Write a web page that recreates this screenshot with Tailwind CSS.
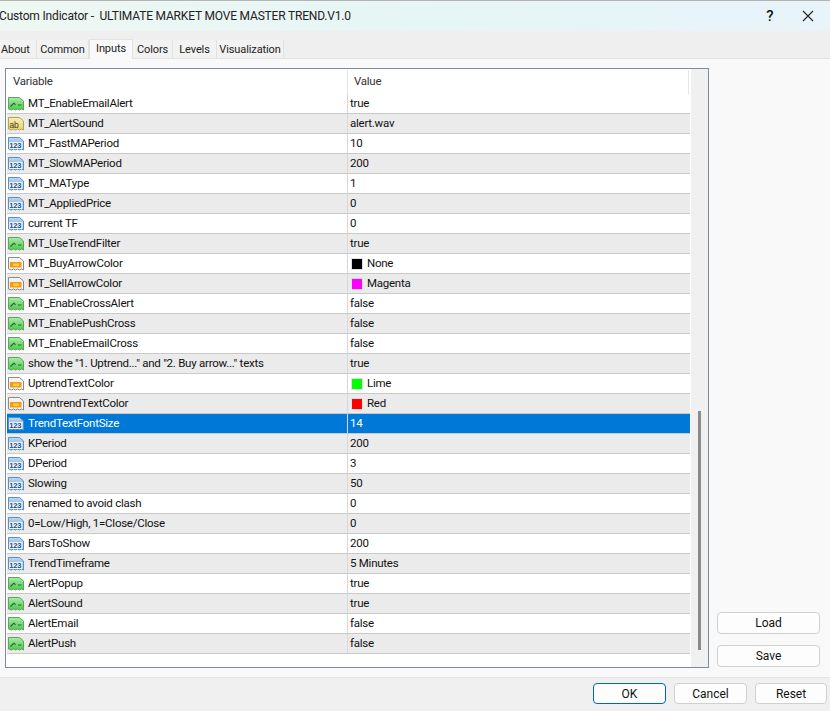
<!DOCTYPE html>
<html lang="en">
<head>
    <meta charset="UTF-8">
    <title>Custom Indicator</title>
    <script src="https://cdn.jsdelivr.net/npm/@tailwindcss/browser@4"></script>
</head>
<body class="bg-[#f9f9f9] text-[#111] font-['Roboto',sans-serif]">
    <!-- gradients for the row icons -->
    <svg class="absolute w-0 h-0">
        <defs>
            <linearGradient id="g-green" x1="0" y1="0" x2="0" y2="1"><stop offset="0" stop-color="#a9eaa9"/><stop offset="1" stop-color="#4fc84f"/></linearGradient>
            <linearGradient id="g-yellow" x1="0" y1="0" x2="0" y2="1"><stop offset="0" stop-color="#f6eeb4"/><stop offset="1" stop-color="#e4d27a"/></linearGradient>
            <linearGradient id="g-blue" x1="0" y1="0" x2="0" y2="1"><stop offset="0" stop-color="#bcd8f2"/><stop offset="1" stop-color="#6fa8dc"/></linearGradient>
        </defs>
    </svg>

    <div class="w-[830px] h-[711px] flex flex-col overflow-hidden">
        <!-- title bar -->
        <div class="h-[31px] shrink-0 border-t border-[#b4b4b4] bg-gradient-to-r from-[#eef8f3] via-[#e6f5f5] to-[#e8f3fa] flex items-center justify-between">
            <div class="text-[12px] tracking-[-0.015em] ml-[-1px] text-[#222] whitespace-pre">Custom Indicator -  ULTIMATE MARKET MOVE MASTER TREND.V1.0</div>
            <div class="flex items-center">
                <span class="w-[20px] text-center text-[15px] font-medium mr-[22px]">?</span>
                <svg class="w-[12px] h-[12px] mr-[16px]" viewBox="0 0 12 12"><path d="M1 1l10 10M11 1L1 11" stroke="#222" stroke-width="1.100"/></svg>
            </div>
        </div>

        <!-- tabs -->
        <div class="h-[28px] shrink-0 bg-[#efefef] border-b border-[#e2e2e2] flex items-end text-[11px] tracking-[-0.1px] leading-none text-[#222]">
            <div class="w-[37px] h-[18px] pt-[1px] border-r border-[#e2e2e2] bg-[#f2f2f2] flex items-center pl-[1px]">About</div>
            <div class="w-[52px] h-[18px] pt-[1px] border-r border-[#e2e2e2] bg-[#f2f2f2] flex items-center justify-center">Common</div>
            <div class="w-[44px] h-[20px] bg-[#f9f9f9] border-x border-t border-[#e2e2e2] mb-[-1px] flex items-start pt-[3px] justify-center">Inputs</div>
            <div class="w-[40px] h-[18px] pt-[1px] border-r border-[#e2e2e2] bg-[#f2f2f2] flex items-center justify-center">Colors</div>
            <div class="w-[44px] h-[18px] pt-[1px] border-r border-[#e2e2e2] bg-[#f2f2f2] flex items-center justify-center">Levels</div>
            <div class="w-[67px] h-[18px] pt-[1px] border-r border-[#e2e2e2] bg-[#f2f2f2] flex items-center justify-center">Visualization</div>
        </div>

        <!-- body -->
        <div class="flex-1 flex pt-[9px] pl-[5px] pr-[10px] pb-[10px] min-h-0">
            <div class="w-[704px] h-[600px] shrink-0 border border-[#7e8a97] bg-white flex">
                <div class="w-[685px] shrink-0 text-[11.500px] tracking-[-0.25px] leading-none">
                    <div class="h-[25px] flex items-center text-[#333] pt-[1px]">
                        <div class="w-[341px] pl-[7px]">Variable</div>
                        <div class="h-full w-[342px] border-l border-r border-[#e5e5e5] pl-[6px] flex items-center">Value</div>
                    </div>
                    <div id="rows" class="ml-[1px] w-[683px]"></div>
                </div>
                <!-- scrollbar -->
                <div class="flex-1 bg-[#f0f0f0] pt-[342px] flex justify-center">
                    <div class="w-[3px] h-[239px] bg-[#8a8a8a]"></div>
                </div>
            </div>
            <div class="flex-1 flex flex-col justify-end items-end gap-[11px]">
                <button class="w-[103px] h-[22px] rounded-[4px] border border-[#d0d0d0] bg-[#fdfdfd] text-[12px] leading-none">Load</button>
                <button class="w-[103px] h-[22px] rounded-[4px] border border-[#d0d0d0] bg-[#fdfdfd] text-[12px] leading-none">Save</button>
            </div>
        </div>

        <!-- footer buttons -->
        <div class="h-[34px] shrink-0 border-t border-[#e6e6e6] bg-[#f0f0f0] flex justify-end items-start pt-[5px] pr-[3px] gap-[8px] text-[12px] leading-none">
            <button class="w-[73px] h-[21px] rounded-[4px] border border-[#0067c0] bg-[#fdfdfd]">OK</button>
            <button class="w-[73px] h-[21px] rounded-[4px] border border-[#d0d0d0] bg-[#fdfdfd]">Cancel</button>
            <button class="w-[72px] h-[21px] rounded-[4px] border border-[#d0d0d0] bg-[#fdfdfd]">Reset</button>
        </div>
    </div>

    <script>
        const params = [
            ['bool', 'MT_EnableEmailAlert', 'true'],
            ['str', 'MT_AlertSound', 'alert.wav'],
            ['num', 'MT_FastMAPeriod', '10'],
            ['num', 'MT_SlowMAPeriod', '200'],
            ['num', 'MT_MAType', '1'],
            ['num', 'MT_AppliedPrice', '0'],
            ['num', 'current TF', '0'],
            ['bool', 'MT_UseTrendFilter', 'true'],
            ['color', 'MT_BuyArrowColor', 'None', '#000000'],
            ['color', 'MT_SellArrowColor', 'Magenta', '#ff00ff'],
            ['bool', 'MT_EnableCrossAlert', 'false'],
            ['bool', 'MT_EnablePushCross', 'false'],
            ['bool', 'MT_EnableEmailCross', 'false'],
            ['bool', 'show the "1. Uptrend..." and "2. Buy arrow..." texts', 'true'],
            ['color', 'UptrendTextColor', 'Lime', '#00ff00'],
            ['color', 'DowntrendTextColor', 'Red', '#ff0000'],
            ['num', 'TrendTextFontSize', '14'],
            ['num', 'KPeriod', '200'],
            ['num', 'DPeriod', '3'],
            ['num', 'Slowing', '50'],
            ['num', 'renamed to avoid clash', '0'],
            ['num', '0=Low/High, 1=Close/Close', '0'],
            ['num', 'BarsToShow', '200'],
            ['num', 'TrendTimeframe', '5 Minutes'],
            ['bool', 'AlertPopup', 'true'],
            ['bool', 'AlertSound', 'true'],
            ['bool', 'AlertEmail', 'false'],
            ['bool', 'AlertPush', 'false']
        ];

        // page with dog-ear and torn bottom edge, same outline for all types
        const PAGE = 'M.5 1.500h11l4 3.500v9l-2-1-2 1-2-1-2 1-2-1-2 1-3-1z';
        const ICONS = {
            bool: `<path d="${PAGE}" fill="url(#g-green)" stroke="#5aa65a"/><path d="M2.500 10.500l3.500-3.500 1.500 2M10 9h3.500" fill="none" stroke="#1f6b25" stroke-width="1.100"/>`,
            str: `<path d="${PAGE}" fill="url(#g-yellow)" stroke="#b5a24e"/><text x="1.500" y="11.500" font-size="8.500" fill="#4a3d10" font-family="Liberation Sans">ab</text>`,
            num: `<path d="${PAGE}" fill="url(#g-blue)" stroke="#5d8fc0"/><rect x="1" y="6" width="13.500" height="7" fill="#eaf3fb"/><text x="1.300" y="12.300" font-size="7.500" font-weight="700" fill="#1f4f86" font-family="Liberation Sans">123</text>`,
            color: `<path d="${PAGE}" fill="#f4f4f4" stroke="#8a8a8a"/><rect x="2" y="6" width="11.500" height="5.500" fill="#f59a12"/><rect x="5" y="7.500" width="6" height="2.500" fill="#ffd23c"/>`
        };

        document.getElementById('rows').innerHTML = params.map(([type, name, value, swatch], i) => {
            const selected = name === 'TrendTextFontSize';
            const rowClass = selected ? 'bg-[#0078d7] text-white' : (i % 2 ? 'bg-[#ebebeb]' : 'bg-white');
            const chip = swatch
                ? `<span class="w-[12px] h-[12px] mr-[4px] ml-[1px] border border-[#e0e0e0]" style="background:${swatch}"></span>`
                : '';
            return `<div class="h-[20px] flex items-center border-b border-[#c9c9c9] ${rowClass}">
                <div class="w-[340px] flex items-center pl-[1px] whitespace-nowrap">
                    <svg class="w-[16px] h-[16px] mr-[4px] shrink-0" viewBox="0 0 16 16">${ICONS[type]}</svg>${name}
                </div>
                <div class="h-full flex-1 flex items-center pl-[2px] border-l border-[#d8d8d8]">${chip}${value}</div>
            </div>`;
        }).join('');
    </script>
</body>
</html>
